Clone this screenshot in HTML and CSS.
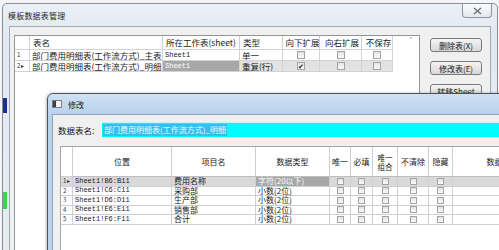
FILE: index.html
```html
<!DOCTYPE html>
<html lang="zh-CN">
<head>
<meta charset="utf-8">
<title>模板数据表管理</title>
<link rel="stylesheet" href="styles.css">
</head>
<body>
<div class="screen">
  <div class="win">
    <div class="titlebar">
      <span class="title">模板数据表管理</span>
      <div class="close">
        <svg width="9" height="8" viewBox="0 0 9 8"><path d="M1 1 L8 7 M8 1 L1 7" stroke="#6b7077" stroke-width="1.4" fill="none"/></svg>
      </div>
    </div>
    <div class="frame">
      <div class="client">
        <div class="gridbox">
          <div class="og">
            <div class="c rh"></div>
            <div class="c h">表名</div>
            <div class="c h">所在工作表(sheet)</div>
            <div class="c h">类型</div>
            <div class="c h ctr">向下扩展</div>
            <div class="c h ctr">向右扩展</div>
            <div class="c h ctr">不保存</div>

            <div class="c rh">1</div>
            <div class="c">部门费用明细表(工作流方式)_主表</div>
            <div class="c mono">Sheet1</div>
            <div class="c">单一</div>
            <div class="c ctr"><span class="cb"></span></div>
            <div class="c ctr"><span class="cb"></span></div>
            <div class="c ctr"><span class="cb"></span></div>

            <div class="c rh">2<span class="arr">▸</span></div>
            <div class="c">部门费用明细表(工作流方式)_明细</div>
            <div class="c mono dark">Sheet1</div>
            <div class="c lite">重复(行)</div>
            <div class="c lite ctr"><span class="cb on">✔</span></div>
            <div class="c lite ctr"><span class="cb"></span></div>
            <div class="c lite ctr"><span class="cb"></span></div>
          </div>
          <div class="filler"></div>
          <div class="vscroll"><span class="up">˄</span></div>
        </div>
        <div class="btns">
          <div class="btn">删除表(X)</div>
          <div class="btn">修改表(E)</div>
          <div class="btn">转移Sheet</div>
        </div>
      </div>
    </div>
  </div>

  <div class="dlg">
    <div class="dtitle">
      <svg class="dicon" width="10" height="8" viewBox="0 0 10 8"><rect x="0.5" y="0.5" width="9" height="7" fill="#f4f4f4" stroke="#7a7f86"/><rect x="1" y="1" width="3" height="6" fill="#3b3f45"/></svg>
      <span class="dtext">修改</span>
    </div>
    <div class="dframe">
      <div class="dclient">
        <div class="namerow">
          <span class="lbl">数据表名:</span>
          <div class="input"><span class="sel">部门费用明细表(工作流方式)_明细</span></div>
        </div>
        <div class="igridbox">
          <div class="ig">
            <div class="c rh"></div>
            <div class="c h ctr">位置</div>
            <div class="c h ctr">项目名</div>
            <div class="c h ctr">数据类型</div>
            <div class="c h ctr">唯一</div>
            <div class="c h ctr">必填</div>
            <div class="c h ctr two">唯一<br>组合</div>
            <div class="c h ctr">不清除</div>
            <div class="c h ctr">隐藏</div>
            <div class="c h ctr last">数据长度</div>

            <div class="c rh cur">1<span class="arr">▸</span></div>
            <div class="c mono cur">Sheet1!B6:B11</div>
            <div class="c cur">费用名称</div>
            <div class="c dark">字符(20以下)</div>
            <div class="c ctr cur"><span class="cb"></span></div>
            <div class="c ctr cur"><span class="cb"></span></div>
            <div class="c ctr cur"><span class="cb"></span></div>
            <div class="c ctr cur"><span class="cb"></span></div>
            <div class="c ctr cur"><span class="cb"></span></div>
            <div class="c cur"></div>

            <div class="c rh">2</div>
            <div class="c mono">Sheet1!C6:C11</div>
            <div class="c">采购部</div>
            <div class="c">小数(2位)</div>
            <div class="c ctr"><span class="cb"></span></div>
            <div class="c ctr"><span class="cb"></span></div>
            <div class="c ctr"><span class="cb"></span></div>
            <div class="c ctr"><span class="cb"></span></div>
            <div class="c ctr"><span class="cb"></span></div>
            <div class="c"></div>

            <div class="c rh">3</div>
            <div class="c mono">Sheet1!D6:D11</div>
            <div class="c">生产部</div>
            <div class="c">小数(2位)</div>
            <div class="c ctr"><span class="cb"></span></div>
            <div class="c ctr"><span class="cb"></span></div>
            <div class="c ctr"><span class="cb"></span></div>
            <div class="c ctr"><span class="cb"></span></div>
            <div class="c ctr"><span class="cb"></span></div>
            <div class="c"></div>

            <div class="c rh">4</div>
            <div class="c mono">Sheet1!E6:E11</div>
            <div class="c">销售部</div>
            <div class="c">小数(2位)</div>
            <div class="c ctr"><span class="cb"></span></div>
            <div class="c ctr"><span class="cb"></span></div>
            <div class="c ctr"><span class="cb"></span></div>
            <div class="c ctr"><span class="cb"></span></div>
            <div class="c ctr"><span class="cb"></span></div>
            <div class="c"></div>

            <div class="c rh">5</div>
            <div class="c mono">Sheet1!F6:F11</div>
            <div class="c">合计</div>
            <div class="c">小数(2位)</div>
            <div class="c ctr"><span class="cb"></span></div>
            <div class="c ctr"><span class="cb"></span></div>
            <div class="c ctr"><span class="cb"></span></div>
            <div class="c ctr"><span class="cb"></span></div>
            <div class="c ctr"><span class="cb"></span></div>
            <div class="c"></div>
          </div>
        </div>
      </div>
    </div>
  </div>
</div>
</body>
</html>
```

FILE: styles.css
```css
* { box-sizing: border-box; }
body {
  margin: 0;
  font-family: "Noto Sans CJK SC", "Noto Sans", sans-serif;
  color: #1a1a1a;
}
.screen {
  width: 499px;
  height: 250px;
  overflow: hidden;
  position: relative;
  background: #f3f5f8;
}

/* outer window */
.win {
  margin: 3px 1px 0 2px;
  height: 262px;
  border: 1px solid #8a8e94;
  border-radius: 5px 5px 0 0;
  background:
    linear-gradient(to bottom, transparent 94px, #1d2f8c 94px, #1d2f8c 109px, transparent 109px,
      transparent 188px, #3fcf55 188px, #3fcf55 205px, transparent 205px) left top / 4px 100% no-repeat,
    linear-gradient(#eaf0f6, #e2e9f1 30px, #e6ecf2);
  display: flex;
  flex-direction: column;
}
.titlebar {
  height: 22px;
  flex: none;
  display: flex;
  justify-content: space-between;
  align-items: center;
  padding: 0 5px 0 5px;
}
.title {
  font-size: 8px;
  color: #2a2a2a;
  letter-spacing: 0.2px;
}
.close {
  align-self: flex-start;
  width: 30px;
  height: 14px;
  border: 1px solid #8e949b;
  border-top: 0;
  border-radius: 0 0 4px 4px;
  background: linear-gradient(#fafbfc, #e4e8ed);
  display: flex;
  align-items: center;
  justify-content: center;
}
.frame {
  flex: 1;
  padding: 0 6px;
  display: flex;
}
.client {
  flex: 1;
  border: 1px solid #a2a9b1;
  background: #f0f0f0;
  padding: 8px 0 0 4px;
  display: flex;
  align-items: flex-start;
}
.gridbox {
  width: 406px;
  height: 240px;
  border: 1px solid #8e959c;
  background: #fff;
  display: flex;
  align-items: flex-start;
}
.og {
  display: grid;
  grid-template-columns: 15px 133px 77px 43px 37px 42px 31px;
  grid-template-rows: 14px 11px 11px;
  font-size: 8.5px;
}
.filler { flex: 1; }
.vscroll {
  width: 16px;
  height: 14px;
  display: flex;
  justify-content: center;
  font-size: 8px;
  color: #555;
  line-height: 10px;
}
.c {
  border-right: 1px solid #d2d2d2;
  border-bottom: 1px solid #d2d2d2;
  display: flex;
  align-items: center;
  white-space: nowrap;
  overflow: hidden;
  padding: 0 2px;
  line-height: 1;
}
.c.h { background: #fff; }
.og .c.h { padding-left: 3px; }
.ctr { justify-content: center; padding: 0; }
.rh {
  font-size: 6px;
  color: #333;
  padding: 0 0 0 2px;
  background: #fff;
}
.arr { font-size: 6px; margin-left: 1px; }
.mono {
  font-family: "Liberation Mono", monospace;
  font-size: 7px;
}
.dark { background: #a7a7a7; color: #fff; }
.lite { background: #e2e2e2; }
.cur { background: #d9d9d9; }
.cb {
  width: 8px;
  height: 8px;
  border: 1px solid #a3a3a3;
  background: linear-gradient(#e4e4e4, #fbfbfb);
  display: flex;
  align-items: center;
  justify-content: center;
  font-size: 7px;
  line-height: 1;
}
.cb.on { color: #111; }

.btns {
  margin: 3px 0 0 10px;
  display: flex;
  flex-direction: column;
  gap: 9px;
}
.btn {
  width: 52px;
  height: 14px;
  border: 1px solid #7a7a7a;
  border-radius: 3px;
  background: linear-gradient(#f5f5f5, #e5e5e5 50%, #d8d8d8);
  font-size: 8px;
  display: flex;
  align-items: center;
  justify-content: center;
  color: #222;
}

/* modal dialog */
.dlg {
  position: absolute;
  left: 47px;
  top: 93px;
  width: 470px;
  height: 175px;
  border: 1px solid #4c5158;
  border-radius: 6px 6px 0 0;
  background: linear-gradient(#cfe1f3, #b9d2ec 20px, #bcd4ec);
  display: flex;
  flex-direction: column;
  box-shadow: -1px 0 3px rgba(0,0,0,0.25);
}
.dtitle {
  height: 20px;
  flex: none;
  display: flex;
  align-items: center;
  padding-left: 4px;
  gap: 6px;
}
.dtext { font-size: 8px; color: #1a1a1a; }
.dframe {
  flex: 1;
  padding: 0 0 0 4px;
  display: flex;
}
.dclient {
  flex: 1;
  border: 1px solid #8fa3b8;
  border-right: 0;
  background: #f0f0f0;
  padding: 7px 0 0 5px;
  display: flex;
  flex-direction: column;
}
.namerow {
  display: flex;
  align-items: center;
  height: 15px;
}
.lbl {
  width: 44px;
  font-size: 8.5px;
  color: #111;
}
.input {
  flex: 1;
  height: 15px;
  background: #00fbff;
  border-top: 1px solid #c8f0f4;
  display: flex;
  align-items: center;
  padding-left: 1px;
}
.sel {
  background: #34bff0;
  color: #e8fbff;
  font-size: 8px;
  height: 12px;
  line-height: 12px;
  padding: 0 1px;
  white-space: nowrap;
}
.igridbox {
  margin: 9px 0 0 2px;
  flex: 1;
  border: 1px solid #a4a4a4;
  border-right: 0;
  background: #fff;
}
.ig {
  display: grid;
  grid-template-columns: 12px 99px 84px 74px 21px 22px 25px 31px 24px 100px;
  grid-template-rows: 30px repeat(5, 9.5px);
  font-size: 8px;
}
.ig .c { border-color: #cfcfcf; overflow: visible; }
.ig .c.h { border-bottom-color: #bdbdbd; }
.ig .two { line-height: 9px; font-size: 7.5px; }
.ig .cb { width: 7px; height: 7px; }
.ig .mono { font-size: 7px; }
```
